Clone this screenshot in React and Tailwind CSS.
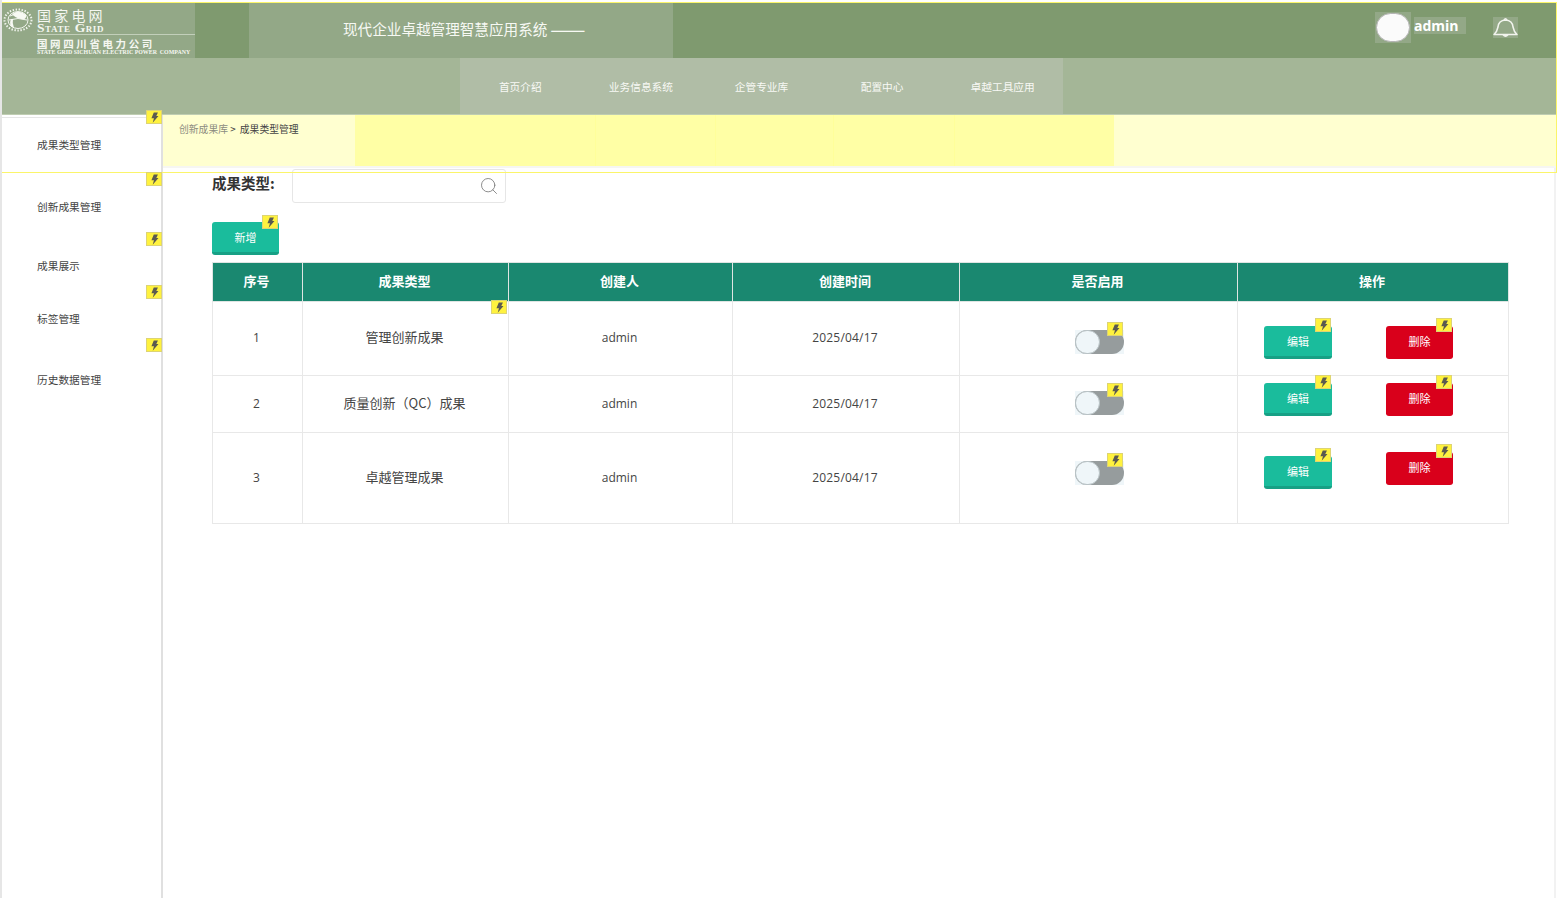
import React from 'react';
import { Search } from 'lucide-react';

const FONT = { fontFamily: '"Noto Sans CJK SC", sans-serif' };
const LATIN = { fontFamily: '"Open Sans", sans-serif' };
const SERIF = { fontFamily: '"Liberation Serif", serif' };

// little yellow flash marker that sits over the controls
const Flash = ({ className }) => (
    <span className={`absolute z-20 flex h-[14px] w-[16px] items-center justify-center border border-[#ddd474] bg-[#fff23f] ${className}`}>
        <svg viewBox="0 0 10 12" className="h-[11px] w-[9px]">
            <path d="M4.2 0.4 L8.8 0.4 L7 4.2 L9.4 4.2 L3 11.7 L4.4 6.8 L1.6 6.8 Z" fill="#5b5a50" />
        </svg>
    </span>
);

const Globe = () => (
    <svg viewBox="0 0 32 24" className="h-[24px] w-[32px] shrink-0">
        <g fill="none" stroke="#f2f5ee">
            <ellipse cx="15" cy="12" rx="13.5" ry="10.5" strokeWidth="2" strokeDasharray="1.4 1.6" />
            <ellipse cx="15" cy="12" rx="10" ry="8.5" strokeWidth="1" />
            <path d="M7 8 Q15 4 23 8 M6 12 Q15 9 24 12" strokeWidth="1" />
        </g>
        <path d="M9 6 Q16 1 23 7 Q24 12 18 11 Q12 10 9 6 Z M8 11 Q5 18 11 20 Q9 15 10 11 Z" fill="#f7f9f3" />
    </svg>
);

const BellIcon = () => (
    <svg viewBox="0 0 25 21" className="h-[21px] w-[25px]" fill="none" stroke="#f2f4ee" strokeWidth="1.5">
        <path d="M1 17.5 Q4 15 5 10 Q5.5 3.5 12.5 3 Q19.5 3.5 20 10 Q21 15 24 17.5 Z" strokeLinejoin="round" />
        <path d="M11 3 Q12.5 0.5 14 3" />
        <path d="M10 17.5 Q12.5 21 15 17.5" fill="#f2f4ee" />
    </svg>
);

const SIDE_ITEMS = [
    { label: '成果类型管理', height: 'h-[55px]', pad: 'pt-[19px]', active: true, flash: '-top-[8px]' },
    { label: '创新成果管理', height: 'h-[60px]', pad: 'pt-[27px]', flash: 'top-0' },
    { label: '成果展示', height: 'h-[53px]', pad: 'pt-[26px]', flash: 'top-0' },
    { label: '标签管理', height: 'h-[53px]', pad: 'pt-[26px]', flash: 'top-0' },
    { label: '历史数据管理', height: 'h-[60px]', pad: 'pt-[34px]', flash: 'top-0' },
];

const NAV_ITEMS = ['首页介绍', '业务信息系统', '企管专业库', '配置中心', '卓越工具应用'];

const ROWS = [
    { no: 1, name: '管理创新成果', height: 'h-[74px]', namePad: 'pb-[4px]', latinPad: 'pb-[2px]', toggle: 'mt-[28px]', edit: 'mt-[24px]', del: 'mt-[24px]', nameFlash: true },
    { no: 2, name: '质量创新（QC）成果', height: 'h-[57px]', namePad: 'pb-[2px]', latinPad: '', toggle: 'mt-[15px]', edit: 'mt-[7px]', del: 'mt-[7px]' },
    { no: 3, name: '卓越管理成果', height: 'h-[91px]', namePad: 'pb-[2px]', latinPad: '', toggle: 'mt-[28px]', edit: 'mt-[23px]', del: 'mt-[19px]' },
];

const ActionButton = ({ label, red, className }) => (
    <div className={`relative flex h-[33px] items-center justify-center rounded-[3px] border-b-[3px] text-[11px] text-white ${red ? 'w-[67px] border-[#d9001b] bg-[#d9001b]' : 'w-[68px] border-[#17a085] bg-[#1abc9c]'} ${className}`}>
        {label}
        <Flash className="-top-[8px] right-[1px]" />
    </div>
);

const Toggle = ({ className }) => (
    <div className={`relative ml-[115px] h-[24px] w-[49px] bg-[#eff6f9] ${className}`}>
        <div className="h-full w-full rounded-full bg-[#969c9d]">
            <div className="h-[24px] w-[25px] rounded-full border border-[#b9c3c6] bg-[#eff6f9]" />
        </div>
        <Flash className="-top-[8px] right-[1px]" />
    </div>
);

export default function App() {
    return (
        <div className="relative h-[898px] w-[1564px] overflow-hidden border-l-2 border-[#e6e6e6] bg-white pr-[8px] pt-[3px]" style={FONT}>
            {/* yellow frame over the top of the page */}
            <div className="pointer-events-none absolute -left-[1px] top-[2px] z-10 h-[171px] w-[1556px] border border-[#fbf56a]" />

            {/* top bar */}
            <header className="flex h-[55px] bg-[#7f9a6f]">
                <div className="flex h-full w-[193px] flex-col bg-[#93a887] pl-[1px] pt-[5px]">
                    <div className="flex items-start gap-[2px]">
                        <Globe />
                        <div className="text-[#f5f7f1]">
                            <div className="whitespace-nowrap text-[14px] leading-[14px] tracking-[3.2px]">国家电网</div>
                            <div className="mt-[1px] whitespace-nowrap text-[13.5px] font-bold leading-[9px] tracking-[0.6px]" style={{ ...SERIF, fontVariant: 'small-caps' }}>State Grid</div>
                        </div>
                    </div>
                    <div className="ml-[34px] mt-[2px] border-t border-[#c2cfba] pt-[3px] text-[#f5f7f1]">
                        <div className="whitespace-nowrap text-[10.5px] font-bold leading-[11px] tracking-[2.6px]">国网四川省电力公司</div>
                        <div className="whitespace-nowrap text-[5.9px] font-bold leading-[6px]" style={SERIF}>STATE GRID SICHUAN ELECTRIC POWER&nbsp; COMPANY</div>
                    </div>
                </div>
                <div className="w-[54px]" />
                <div className="flex w-[424px] items-center whitespace-nowrap bg-[#93a887] pb-[4px] pl-[94px] text-[14.6px] text-[#f7f9f4]">
                    现代企业卓越管理智慧应用系统 <span className="ml-[3px] text-[21px] leading-none">——</span>
                </div>
                <div className="flex flex-1 pl-[702px] pt-[9px]">
                    <div className="h-[31px] w-[36px] bg-[#93a887] p-[1px]">
                        <div className="h-[29px] w-[34px] rounded-full border border-[#b5b5b5] bg-[#fbfbfb]" />
                    </div>
                    <div className="ml-[3px] mt-[5px] flex h-[17px] w-[52px] items-center bg-[#93a887] text-[14px] font-bold text-white" style={LATIN}>admin</div>
                    <div className="ml-[27px] mt-[5px] h-[21px] w-[25px] bg-[#93a887]">
                        <BellIcon />
                    </div>
                </div>
            </header>

            {/* nav bar */}
            <nav className="flex h-[57px] border-b border-[#bfcdb2] bg-[#a4b697] pl-[458px]">
                <div className="grid h-full w-[603px] grid-cols-5 bg-[#b0bda6]">
                    {NAV_ITEMS.map((item) => (
                        <div key={item} className="flex items-center justify-center pt-[2px] text-[10.7px] text-[#f8f9f5]">{item}</div>
                    ))}
                </div>
            </nav>

            <div className="flex">
                {/* sidebar */}
                <aside className="relative h-[783px] w-[161px] shrink-0 border-r-2 border-[#e0e0e0] pt-[2px]">
                    {SIDE_ITEMS.map((item) => (
                        <div key={item.label} className={`relative ${item.height} ${item.pad} pl-[35px] text-[10.7px] leading-[16px] text-[#444] ${item.active ? 'border-t border-[#e6e6e6]' : ''}`}>
                            {item.label}
                            <Flash className={`-right-[1px] ${item.flash}`} />
                        </div>
                    ))}
                </aside>

                <main className="flex min-w-0 flex-1 flex-col">
                    {/* breadcrumb strip */}
                    <div className="flex h-[53px] border-b-2 border-[#f6f6f2] bg-[#ffffd0] text-[9.8px] text-[#444]">
                        <div className="w-[192px] pl-[16px] pt-[7px] leading-[14px]">
                            <span className="text-[#8c8c80]">创新成果库</span> &gt; <span className="ml-[2px]">成果类型管理</span>
                        </div>
                        <div className="flex h-[51px] w-[759px] bg-[#ffffa5]">
                            <div className="w-[241px] border-r border-[#ffff9a]" />
                            <div className="w-[120px] border-r border-[#ffff9a]" />
                            <div className="w-[118px] border-r border-[#ffff9a]" />
                            <div className="w-[121px] border-r border-[#ffff9a]" />
                        </div>
                    </div>

                    <div className="flex-1 border-r-2 border-[#f2f2f2] pl-[49px]">
                        {/* filter */}
                        <div className="flex h-[35px] items-start pt-[1px]">
                            <div className="w-[80px] pt-[4px] text-[14.5px] font-semibold leading-[20px] text-[#333]">成果类型:</div>
                            <div className="flex h-[34px] w-[214px] items-center justify-end rounded-[3px] border border-[#e6e6e6] bg-white pr-[6px]">
                                <Search className="h-[20px] w-[20px] text-[#777]" strokeWidth={1} />
                            </div>
                        </div>

                        {/* add button */}
                        <div className="relative mt-[19px] flex h-[33px] w-[67px] items-center justify-center rounded-[3px] border-b-[3px] border-[#17a085] bg-[#1abc9c] text-[11px] text-white">
                            新增
                            <Flash className="-top-[7px] right-[1px]" />
                        </div>

                        {/* table */}
                        <table className="mt-[7px] w-[1296px] table-fixed border-collapse text-[13px] text-[#444]">
                            <colgroup>
                                <col className="w-[90px]" />
                                <col className="w-[206px]" />
                                <col className="w-[224px]" />
                                <col className="w-[227px]" />
                                <col className="w-[278px]" />
                                <col className="w-[271px]" />
                            </colgroup>
                            <thead>
                                <tr className="h-[39px] bg-[#1a8870] text-[13px] font-bold text-white">
                                    {['序号', '成果类型', '创建人', '创建时间', '是否启用', '操作'].map((title) => (
                                        <th key={title} className="border border-[#dfe5e3] pb-[3px] pr-[2px] font-bold">{title}</th>
                                    ))}
                                </tr>
                            </thead>
                            <tbody>
                                {ROWS.map((row) => (
                                    <tr key={row.no} className={row.height}>
                                        <td className={`border border-[#e8e8e8] pr-[2px] text-center text-[12px] ${row.latinPad}`} style={LATIN}>{row.no}</td>
                                        <td className={`relative border border-[#e8e8e8] pr-[2px] text-center ${row.namePad}`}>
                                            {row.name}
                                            {row.nameFlash && <Flash className="right-[1px] -top-[2px]" />}
                                        </td>
                                        <td className={`border border-[#e8e8e8] pr-[2px] text-center text-[12px] ${row.latinPad}`} style={LATIN}>admin</td>
                                        <td className={`border border-[#e8e8e8] pr-[2px] text-center text-[12px] tracking-[0.2px] ${row.latinPad}`} style={LATIN}>2025/04/17</td>
                                        <td className="border border-[#e8e8e8] align-top">
                                            <Toggle className={row.toggle} />
                                        </td>
                                        <td className="border border-[#e8e8e8] align-top">
                                            <div className="flex items-start pl-[26px]">
                                                <ActionButton label="编辑" className={row.edit} />
                                                <ActionButton label="删除" red className={`ml-[54px] ${row.del}`} />
                                            </div>
                                        </td>
                                    </tr>
                                ))}
                            </tbody>
                        </table>
                    </div>
                </main>
            </div>
        </div>
    );
}
